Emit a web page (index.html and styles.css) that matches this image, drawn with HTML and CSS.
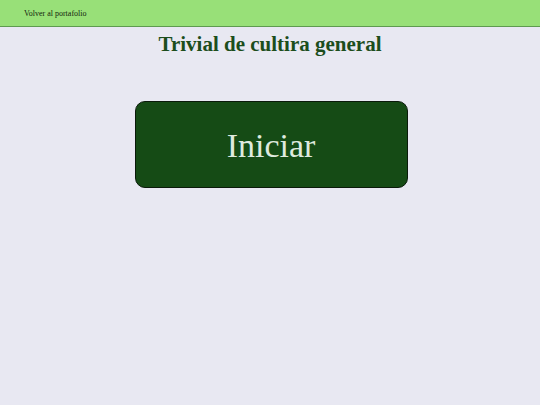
FILE: index.html
```html
<!DOCTYPE html>
<html lang="es">
<head>
    <meta charset="UTF-8">
    <title>Trivial de cultira general</title>
    <link rel="stylesheet" href="styles.css">
</head>
<body>
    <header class="top-bar">
        <a class="back-link" href="#">Volver al portafolio</a>
    </header>
    <main class="game">
        <h1 class="game-title">Trivial de cultira general</h1>
        <button class="start-btn">Iniciar</button>
    </main>
</body>
</html>
```

FILE: styles.css
```css
body {
    margin: 0;
    background: #e8e8f2;
    font-family: "Liberation Serif", "Times New Roman", serif;
}
.top-bar {
    background: #98e078;
    height: 26px;
    border-bottom: 1px solid #5e9a50;
    display: flex;
    align-items: center;
    padding-left: 24px;
}
.back-link {
    color: #13240c;
    font-size: 8px;
    text-decoration: none;
}
.game {
    display: flex;
    flex-direction: column;
    align-items: center;
}
.game-title {
    color: #1c4d1c;
    font-size: 21px;
    margin: 5px 0 0;
    line-height: 24px;
}
.start-btn {
    margin: 45px 0 0 2px;
    width: 273px;
    height: 87px;
    padding-top: 4px;
    background: #154b15;
    border: 1px solid #0a1a0a;
    border-radius: 10px;
    color: #dfeadf;
    font-family: "Liberation Serif", "Times New Roman", serif;
    font-size: 34px;
}
```
